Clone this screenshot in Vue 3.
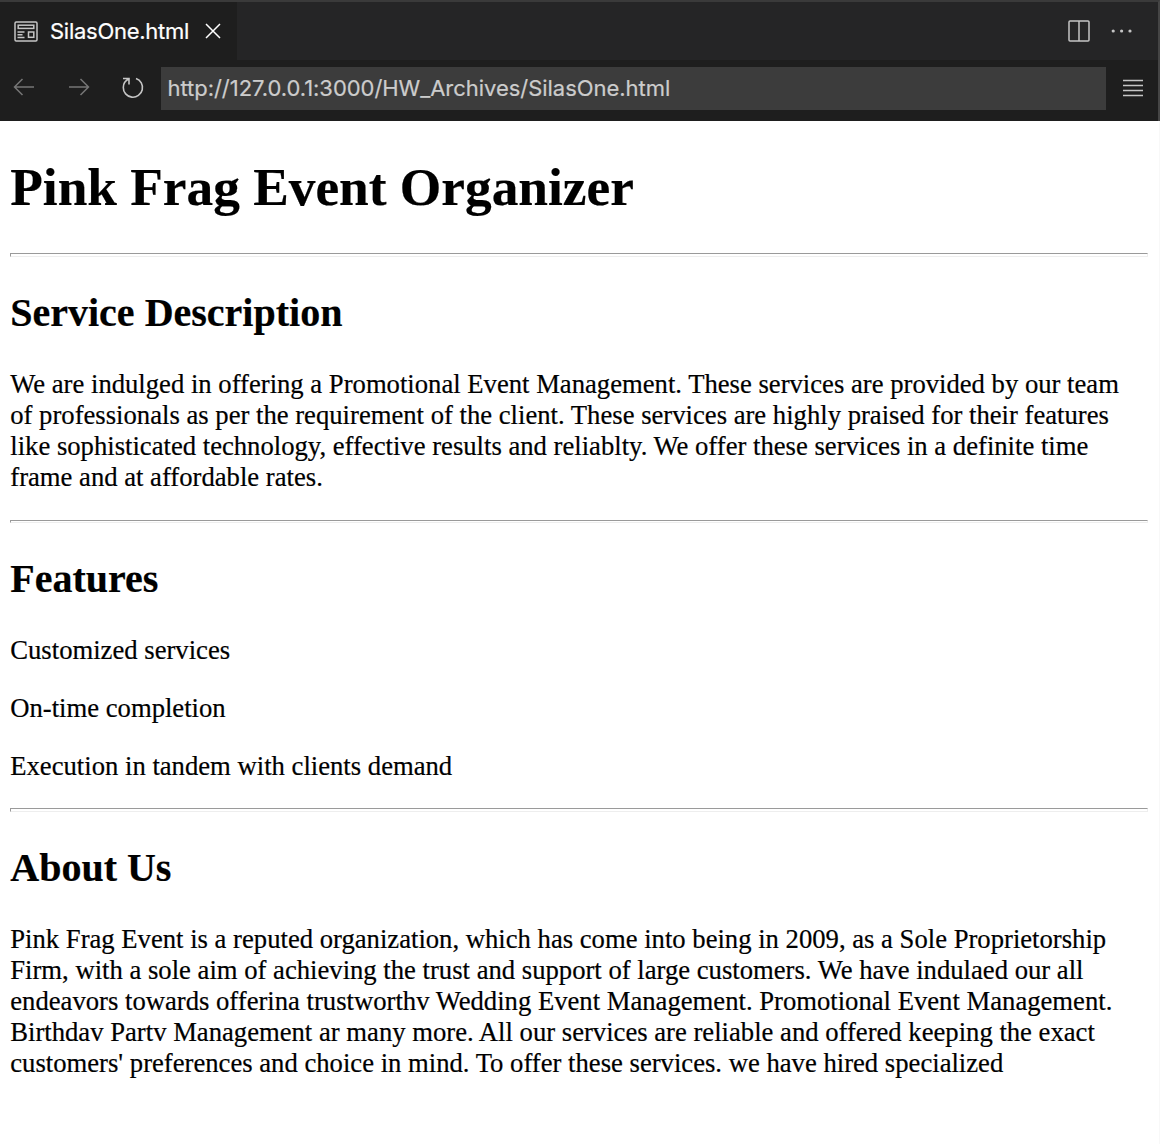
<script setup>
const service = [
  'We are indulged in offering a Promotional Event Management. These services are provided by our team',
  'of professionals as per the requirement of the client. These services are highly praised for their features',
  'like sophisticated technology, effective results and reliablty. We offer these services in a definite time',
  'frame and at affordable rates.',
]
const features = ['Customized services', 'On-time completion', 'Execution in tandem with clients demand']
const about = [
  'Pink Frag Event is a reputed organization, which has come into being in 2009, as a Sole Proprietorship',
  'Firm, with a sole aim of achieving the trust and support of large customers. We have indulaed our all',
  'endeavors towards offerina trustworthv Wedding Event Management. Promotional Event Management.',
  'Birthdav Partv Management ar many more. All our services are reliable and offered keeping the exact',
  "customers' preferences and choice in mind. To offer these services. we have hired specialized",
]
</script>

<template>
  <div class="window">
    <header class="tabs">
      <div class="tab">
        <svg class="page-icon" width="24" height="21" viewBox="0 0 24 21" fill="none" stroke="#c5c5c5" stroke-width="1.5">
          <rect x="1" y="1" width="22" height="19" rx="1.2" />
          <rect x="4.2" y="4.2" width="15.6" height="3.2" />
          <path d="M3.5 11H10.5M3.5 13.7H8.5M3.5 16.5H10.5" />
          <rect x="14.5" y="11" width="5.3" height="5.3" />
        </svg>
        <span class="name">SilasOne.html</span>
        <svg width="16" height="16" viewBox="0 0 16 16" stroke="#fff" stroke-width="1.5"><path d="M1 1L15 15M15 1L1 15" /></svg>
      </div>
      <div class="actions">
        <svg width="22" height="22" viewBox="0 0 22 22" fill="none" stroke="#c5c5c5" stroke-width="1.5"><rect x="1" y="1" width="20" height="20" rx="1" /><path d="M11 1V21" /></svg>
        <svg width="22" height="4" viewBox="0 0 22 4" fill="#c5c5c5"><circle cx="2.2" cy="2" r="1.6" /><circle cx="10.6" cy="2" r="1.6" /><circle cx="19" cy="2" r="1.6" /></svg>
      </div>
    </header>
    <nav class="bar">
      <svg class="back" width="22" height="18" viewBox="0 0 22 18" fill="none" stroke="#767676" stroke-width="1.5"><path d="M21 9H1.5M9.5 1L1.5 9L9.5 17" /></svg>
      <svg class="forward" width="22" height="18" viewBox="0 0 22 18" fill="none" stroke="#767676" stroke-width="1.5"><path d="M1 9H20.5M12.5 1L20.5 9L12.5 17" /></svg>
      <svg class="reload" width="22" height="22" viewBox="0 0 22 22" fill="none" stroke="#c5c5c5" stroke-width="1.6"><path d="M1 1.5H7V7.5M7 2C3.3 3.6 1.3 6.6 1.3 10.4A9.6 9.6 0 1 0 14 1.5" /></svg>
      <div class="url">http://127.0.0.1:3000/HW_Archives/SilasOne.html</div>
      <svg class="menu" width="20" height="18" viewBox="0 0 20 18" stroke="#c5c5c5" stroke-width="1.7"><path d="M0 1.5H20M0 6.5H20M0 11.5H20M0 16.5H20" /></svg>
    </nav>
    <main>
      <h1>Pink Frag Event Organizer</h1>
      <hr />
      <h2>Service Description</h2>
      <p><span v-for="l in service" :key="l" class="line">{{ l }}</span></p>
      <hr class="thin" />
      <h2>Features</h2>
      <div class="features"><p v-for="l in features" :key="l">{{ l }}</p></div>
      <hr />
      <h2>About Us</h2>
      <p><span v-for="l in about" :key="l" class="line">{{ l }}</span></p>
    </main>
  </div>
</template>

<style>
body { margin: 0; }
</style>

<style scoped>
.window { width: 1160px; height: 1144px; overflow: hidden; background: #fff; font-family: "Liberation Serif", serif; color: #000; }
.tabs, .bar { box-sizing: border-box; border-right: 2px solid #454545; }
.tabs { display: flex; justify-content: space-between; height: 60px; border-top: 2px solid #3a3a3a; background: #252526; font: 22px Inter, sans-serif; }
.tab { display: flex; align-items: center; width: 237px; background: #1e1e1e; color: #fff; padding-left: 14px; box-sizing: border-box; }
.name { margin-left: 12px; width: 154.5px; white-space: nowrap; letter-spacing: -0.27px; -webkit-text-stroke: 0.2px #fff; }
.actions { display: flex; align-items: center; gap: 21px; margin-right: 25px; }
.bar { display: flex; align-items: center; height: 61px; padding-bottom: 4px; background: #1e1e1e; font: 22px Inter, sans-serif; color: #ccc; }
.back { margin: 0 0 4px 12.5px; }
.forward { margin: 0 0 4px 33px; }
.reload { margin: 0 0 1px 32px; }
.url { margin-left: 17.5px; width: 945px; height: 43px; line-height: 43px; padding-left: 6.5px; box-sizing: border-box; background: #3c3c3c; white-space: nowrap; letter-spacing: -0.04px; -webkit-text-stroke: 0.2px #ccc; }
.menu { margin: 0 0 1px 17px; }
main { box-sizing: border-box; height: 1023px; padding: 35px 11px 0 10px; border-right: 1px solid #f8f8f8; }
h1, h2, p { text-indent: 0.25px; -webkit-text-stroke: 0.2px #000; }
h1 { margin: 0 0 35px; font-size: 53.333px; line-height: 62px; }
h2 { margin: 33px 0; font-size: 40px; line-height: 46px; }
p { margin: 0 0 27px; font-size: 26.667px; line-height: 31px; }
.features { margin-bottom: 26px; }
.features p:last-child { margin-bottom: 0; }
.line { display: block; white-space: nowrap; }
hr { box-sizing: border-box; height: 4px; margin: 0; border: 1px solid #eee; border-top-color: #9a9a9a; border-left-color: #9a9a9a; }
.thin { height: 3px; }
</style>
